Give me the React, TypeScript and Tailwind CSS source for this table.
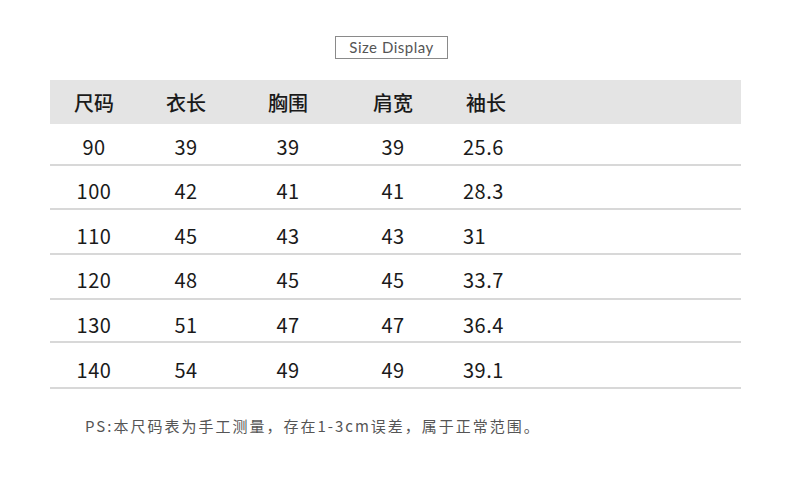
import React from "react";

const rows = [
  ["90", "39", "39", "39", "25.6"],
  ["100", "42", "41", "41", "28.3"],
  ["110", "45", "43", "43", "31"],
  ["120", "48", "45", "45", "33.7"],
  ["130", "51", "47", "47", "36.4"],
  ["140", "54", "49", "49", "39.1"],
];

const rowClasses = [
  "h-[42px] pt-[6px]",
  "h-[44px] pt-[8px]",
  "h-[45px] pt-[8px]",
  "h-[45px] pt-[6px]",
  "h-[43px] pt-[8px]",
  "h-[46px] pt-[10px]",
];

const heads = ["尺码", "衣长", "胸围", "肩宽", "袖长"];

function Cells({ cells, head }: { cells: string[]; head?: boolean }) {
  return (
    <>
      <div className="w-[88px] flex justify-center">{cells[0]}</div>
      <div className="w-[96px] flex justify-center">{cells[1]}</div>
      <div className="w-[108px] flex justify-center">{cells[2]}</div>
      <div className="w-[102px] flex justify-center">{cells[3]}</div>
      <div className={head ? "pl-[22px]" : "pl-[19px]"}>{cells[4]}</div>
    </>
  );
}

export default function App() {
  return (
    <div
      className="w-[790px] h-[483px] bg-white flex flex-col text-[#1a1a1a]"
      style={{ fontFamily: '"Noto Sans CJK SC", "Noto Sans", sans-serif' }}
    >
      <div className="pt-[36px] pl-[335px]">
        <div
          className="w-[113px] h-[23px] border border-[#8a8a8a] flex items-center justify-center text-[15px] tracking-[0.5px] text-[#555] leading-none"
          style={{ fontFamily: 'Lato, "Open Sans", sans-serif' }}
        >
          Size Display
        </div>
      </div>
      <div className="ml-[50px] w-[691px] mt-[21px] flex flex-col">
        <div className="h-[44px] bg-[#e4e4e4] flex items-center pt-[2px] text-[20px] font-medium">
          <Cells cells={heads} head />
        </div>
        {rows.map((r, i) => (
          <div
            key={i}
            className={
              rowClasses[i] +
              " flex items-center border-b-2 border-[#d8d8d8] text-[20px] tracking-[0.5px]"
            }
          >
            <Cells cells={r} />
          </div>
        ))}
      </div>
      <div className="ml-[85px] mt-[29px] text-[15px] text-[#555] tracking-[2px] leading-none">
        PS:本尺码表为手工测量，存在1-3cm误差，属于正常范围。
      </div>
    </div>
  );
}
